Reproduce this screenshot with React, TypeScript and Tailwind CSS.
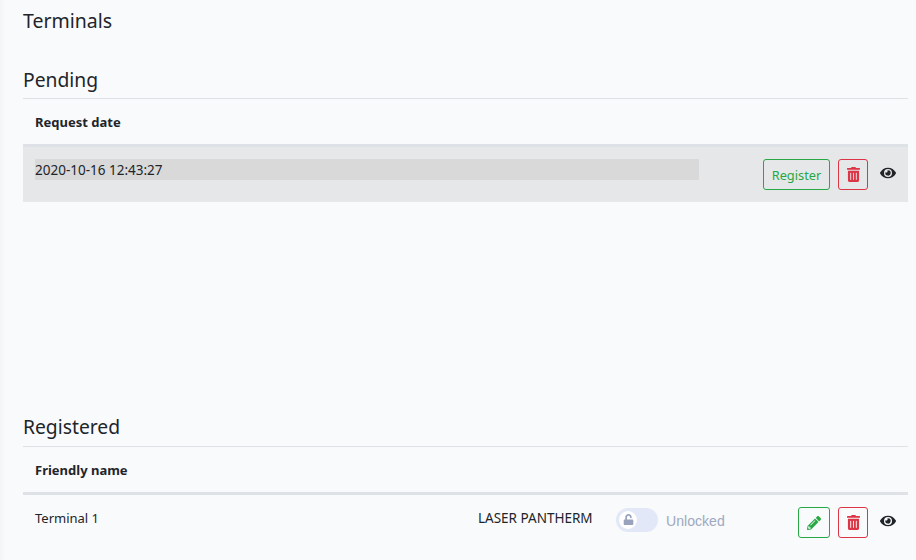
import React from "react";
import { FaEye, FaPencilAlt, FaTrashAlt, FaUnlock } from "react-icons/fa";

const TrashButton = () => (
  <button className="w-[30px] h-[31px] flex items-center justify-center rounded-[3px] border border-[#dc3545] text-[#dc3545]">
    <FaTrashAlt className="w-[13px] h-[15px]" />
  </button>
);

const EyeIcon = () => <FaEye className="w-4 h-4 text-[#212529] ml-1 mb-[3px]" />;

const SectionTitle = ({ title, className }: { title: string; className: string }) => (
  <h2 className={`text-[19.3px] leading-[24px] text-[#212529] border-b border-[#dee2e6] ${className}`}>
    {title}
  </h2>
);

const HeaderRow = ({ label }: { label: string }) => (
  <div className="h-[48px] pl-3 pt-[2px] flex items-center border-b-[3px] border-[#dee2e6] font-bold text-[13px] text-[#212529]">
    {label}
  </div>
);

export default function App() {
  return (
    <div
      className="w-[916px] h-[560px] overflow-hidden bg-[#f9fafc] pl-[23px] pr-[8px] text-[13.5px] text-[#212529] shadow-[inset_8px_0_8px_-8px_rgba(0,0,0,0.05)]"
      style={{ fontFamily: '"Noto Sans", "Open Sans", sans-serif' }}
    >
      <h1 className="pt-[9px] text-[19.5px] leading-[24px] text-[#212529]">Terminals</h1>

      <section className="mt-[35px]">
        <SectionTitle title="Pending" className="pb-[6px]" />
        <HeaderRow label="Request date" />
        <div className="h-[55px] bg-[#e6e7e9] pl-3 pr-3 pt-[12px] flex items-start">
          <div className="w-[664px] h-[21px] bg-[#d9d9d9] leading-[22px]">2020-10-16 12:43:27</div>
          <div className="ml-auto flex items-center gap-2">
            <button className="w-[67px] h-[31px] pt-[2px] rounded-[3px] border border-[#28a745] text-[#28a745] text-[12.8px]">
              Register
            </button>
            <TrashButton />
            <EyeIcon />
          </div>
        </div>
      </section>

      <section className="mt-[213px]">
        <SectionTitle title="Registered" className="pb-[7px]" />
        <HeaderRow label="Friendly name" />
        <div className="h-[55px] pl-3 pr-3 pt-[12px] flex items-start">
          <div className="w-[443px] leading-[21px] pt-[1px] text-[13px]">Terminal 1</div>
          <div className="w-[138px] leading-[21px] pt-[1px]">LASER PANTHERM</div>
          <div className="flex items-center">
            <div className="w-[42px] h-[24px] rounded-full bg-[#e2e8f7] flex items-center pl-[3px]">
              <div className="w-[18px] h-[18px] rounded-full bg-white flex items-center justify-center">
                <FaUnlock className="w-[11px] h-[11px] text-[#9aa3bd]" />
              </div>
            </div>
            <span className="ml-2 mt-[4px] text-[14.1px] text-[#a0a8c0]" style={{ fontFamily: '"Liberation Sans", sans-serif' }}>
              Unlocked
            </span>
          </div>
          <div className="ml-auto flex items-center gap-2">
            <button className="w-[32px] h-[31px] flex items-center justify-center rounded-[3px] border border-[#28a745] text-[#28a745]">
              <FaPencilAlt className="w-[14px] h-[14px]" />
            </button>
            <TrashButton />
            <EyeIcon />
          </div>
        </div>
      </section>
    </div>
  );
}
